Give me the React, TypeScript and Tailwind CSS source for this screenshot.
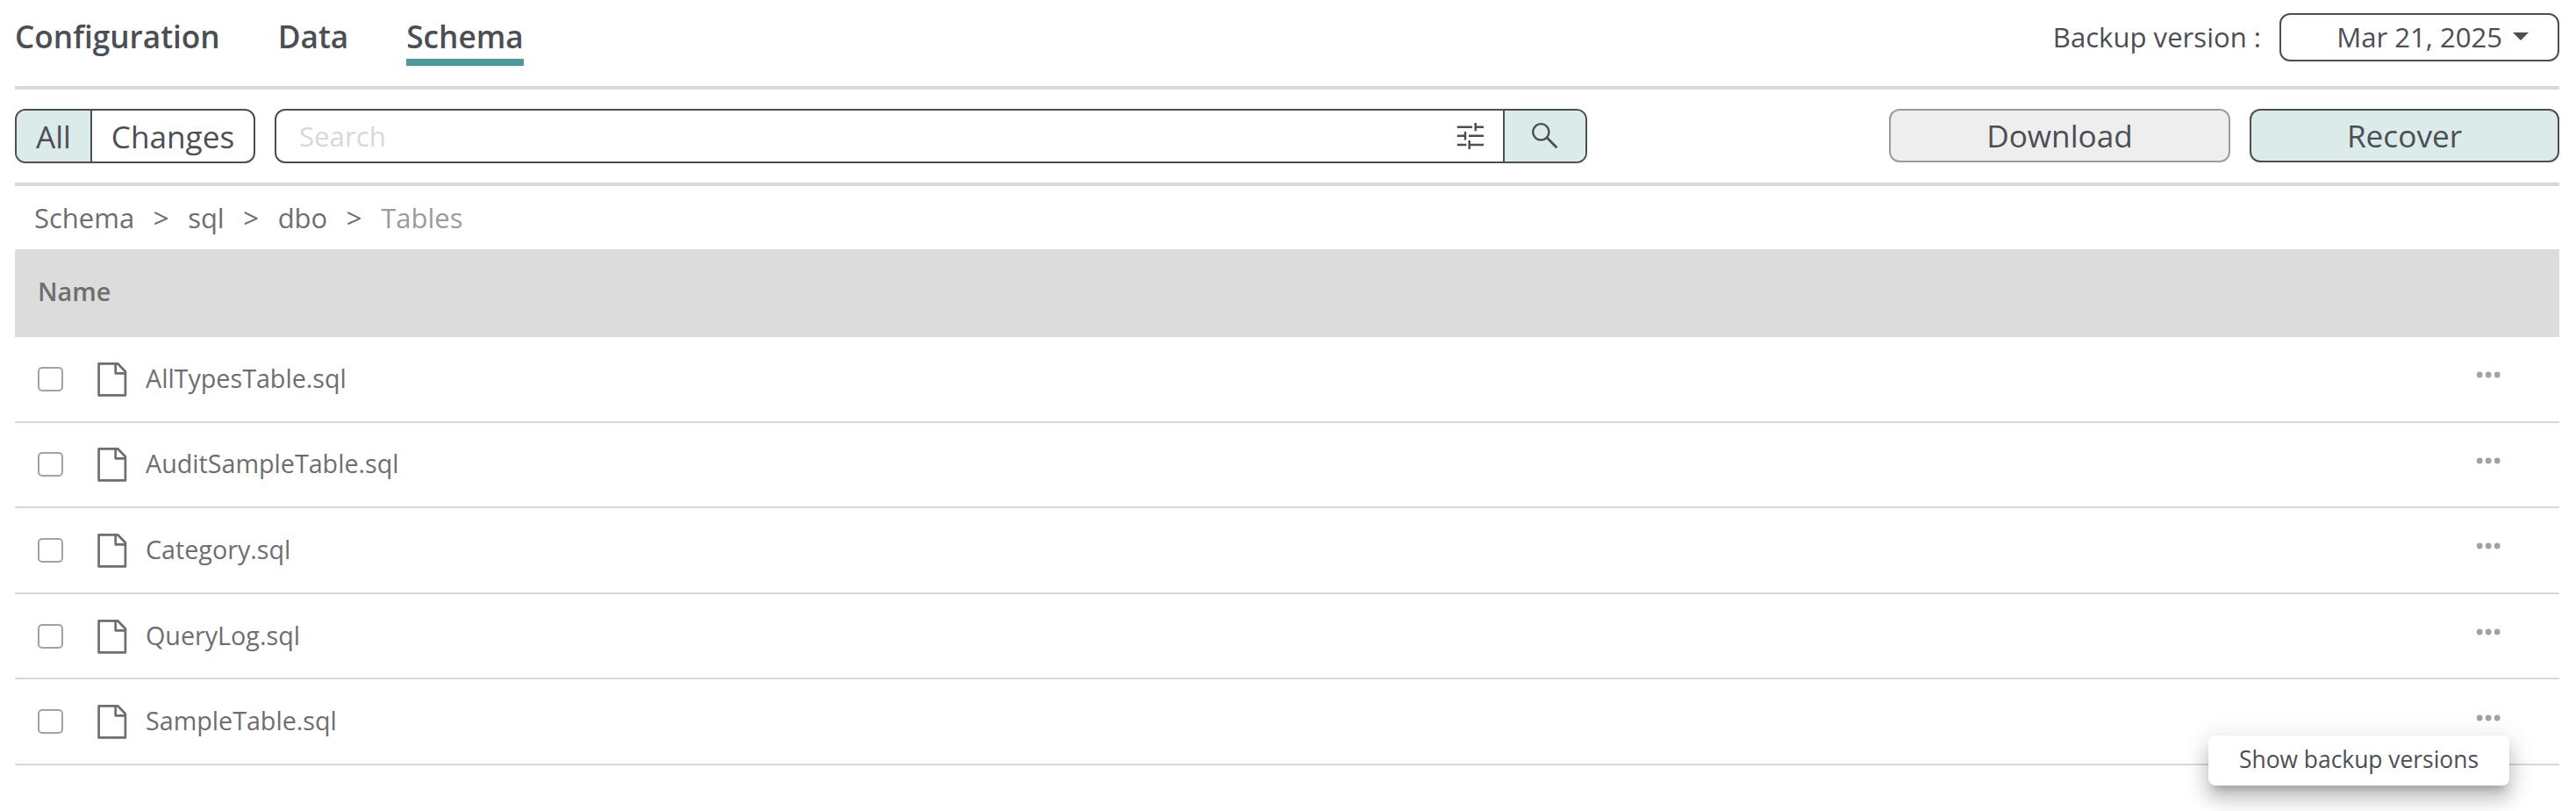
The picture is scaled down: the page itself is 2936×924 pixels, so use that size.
import { Fragment } from 'react';

const tabs = ['Configuration', 'Data', 'Schema'];
const crumbs = ['Schema', 'sql', 'dbo'];
const files = [
  'AllTypesTable.sql',
  'AuditSampleTable.sql',
  'Category.sql',
  'QueryLog.sql',
  'SampleTable.sql',
];

function FilterIcon() {
  return (
    <svg width="32" height="32" viewBox="0 0 32 32" fill="none" stroke="#4b4f54" strokeWidth="2.5">
      <path d="M1.8 5.7H19M22.7 1v9.3M22.7 5.7H32" />
      <path d="M1.8 15.8H11M11 11v9.6M15 15.8h17" />
      <path d="M1.8 26h10.5M15.7 21v10M15.7 26H32" />
    </svg>
  );
}

function SearchIcon() {
  return (
    <svg width="32" height="32" viewBox="0 0 32 32" fill="none" stroke="#4b4f54" strokeWidth="2.4">
      <circle cx="11.3" cy="11.3" r="9.2" />
      <path d="M17.8 17.6l11.6 11.6" strokeWidth="2.8" />
    </svg>
  );
}

function FileIcon() {
  return (
    <svg className="block" width="34" height="40" viewBox="0 0 34 40" fill="none" stroke="#6e6e6e" strokeWidth="2.7" strokeLinejoin="round">
      <path d="M1.6 2.3h21.6l8.7 8.9v27.2H1.6z" />
      <path d="M20.7 2.3v11h11.2" />
    </svg>
  );
}

function MoreIcon() {
  return (
    <svg width="28" height="8" viewBox="0 0 28 8" fill="#9fa3a2">
      <circle cx="4.2" cy="4" r="3.4" />
      <circle cx="14.2" cy="4" r="3.4" />
      <circle cx="24.2" cy="4" r="3.4" />
    </svg>
  );
}

export default function App() {
  return (
    <div className="h-[924px] w-full overflow-hidden bg-white pr-[19px] pl-[17px] font-['Open_Sans',sans-serif] text-[#4b4f54]">
      {/* Tabs */}
      <header className="flex h-[102px] items-start justify-between border-b-4 border-[#d8d8d8]">
        <nav className="flex gap-[66px]">
          {tabs.map((tab) => (
            <button
              key={tab}
              className={
                tab === 'Schema'
                  ? 'h-[75px] border-b-8 border-[#4d9a9b] pt-4 pb-px text-[35.2px] leading-[50px] font-semibold'
                  : 'h-[75px] border-b-8 border-transparent pt-4 pb-px text-[35.2px] leading-[50px] font-semibold'
              }
            >
              {tab}
            </button>
          ))}
        </nav>
        <div className="flex items-center gap-[21px] pt-[15px] text-[31.1px]">
          <span className="pb-px">Backup version :</span>
          <button className="flex h-[55px] w-[319px] items-center justify-end gap-3 rounded-[12px] border-2 border-[#4b4f54] pr-[33px] pb-px">
            <span>Mar 21, 2025</span>
            <svg className="mb-px" width="18" height="9" viewBox="0 0 18 9" fill="#4b4f54">
              <path d="M0 0h18l-9 9z" />
            </svg>
          </button>
        </div>
      </header>

      {/* Toolbar */}
      <div className="flex h-[110px] items-start border-b-4 border-[#d8d8d8] pt-[22px] text-[35.2px]">
        <div className="flex h-[62px] w-[274px] overflow-hidden rounded-[12px] border-2 border-[#4b4f54]">
          <button className="w-[86px] border-r-2 border-[#4b4f54] bg-[#dbebea]">All</button>
          <button className="flex-1">Changes</button>
        </div>
        <div className="ml-[22px] flex h-[62px] w-[1496px] overflow-hidden rounded-[12px] border-2 border-[#4b4f54]">
          <div className="flex flex-1 items-center justify-between pr-[22px] pl-[26px] text-[31.2px] text-[#d8d8d8]">
            <span>Search</span>
            <FilterIcon />
          </div>
          <button className="flex w-[94px] items-center justify-center border-l-2 border-[#4b4f54] bg-[#dbebea]">
            <SearchIcon />
          </button>
        </div>
        <div className="ml-auto flex gap-[22px]">
          <button className="h-[61px] w-[389px] rounded-[12px] border-2 border-[#9b9b9b] bg-[#eeeeee]">Download</button>
          <button className="h-[61px] w-[353px] rounded-[12px] border-2 border-[#4b4f54] bg-[#dbebea]">Recover</button>
        </div>
      </div>

      {/* Breadcrumb */}
      <div className="flex h-[72px] items-center pl-[22px] text-[31px] text-[#6e6e6e]">
        {crumbs.map((crumb) => (
          <Fragment key={crumb}>
            <span>{crumb}</span>
            <span className="mx-[21.6px]">&gt;</span>
          </Fragment>
        ))}
        <span className="text-[#9b9b9b]">Tables</span>
      </div>

      {/* File table */}
      <div className="flex h-[100px] items-center bg-[#dcdcdc] pb-[5px] pl-[26px] text-[28.8px] font-semibold text-[#6e6e6e]">
        Name
      </div>
      {files.map((file) => (
        <div
          key={file}
          className="relative flex h-[97.6px] items-center border-b-2 border-[#d8d8d8] pl-[26px] text-[28.7px] text-[#6e6e6e]"
        >
          <span className="h-[28px] w-[29px] shrink-0 rounded-[5px] border-2 border-[#9fa3a2]" />
          <span className="mr-[21px] ml-[39px] shrink-0">
            <FileIcon />
          </span>
          <span className="flex-1 pb-[3px]">{file}</span>
          <span className="mr-[67px] mb-[9px] flex">
            <MoreIcon />
          </span>
          {file === 'SampleTable.sql' && (
            <div className="absolute top-[63.6px] right-[57px] flex h-[57px] w-[343px] items-center justify-center rounded-[8px] bg-white pb-px text-[26.4px] text-[#4b4f54] shadow-[0_10px_10px_-6px_rgba(0,0,0,0.2),0_16px_20px_2px_rgba(0,0,0,0.14),0_6px_28px_4px_rgba(0,0,0,0.12)]">
              Show backup versions
            </div>
          )}
        </div>
      ))}
    </div>
  );
}
